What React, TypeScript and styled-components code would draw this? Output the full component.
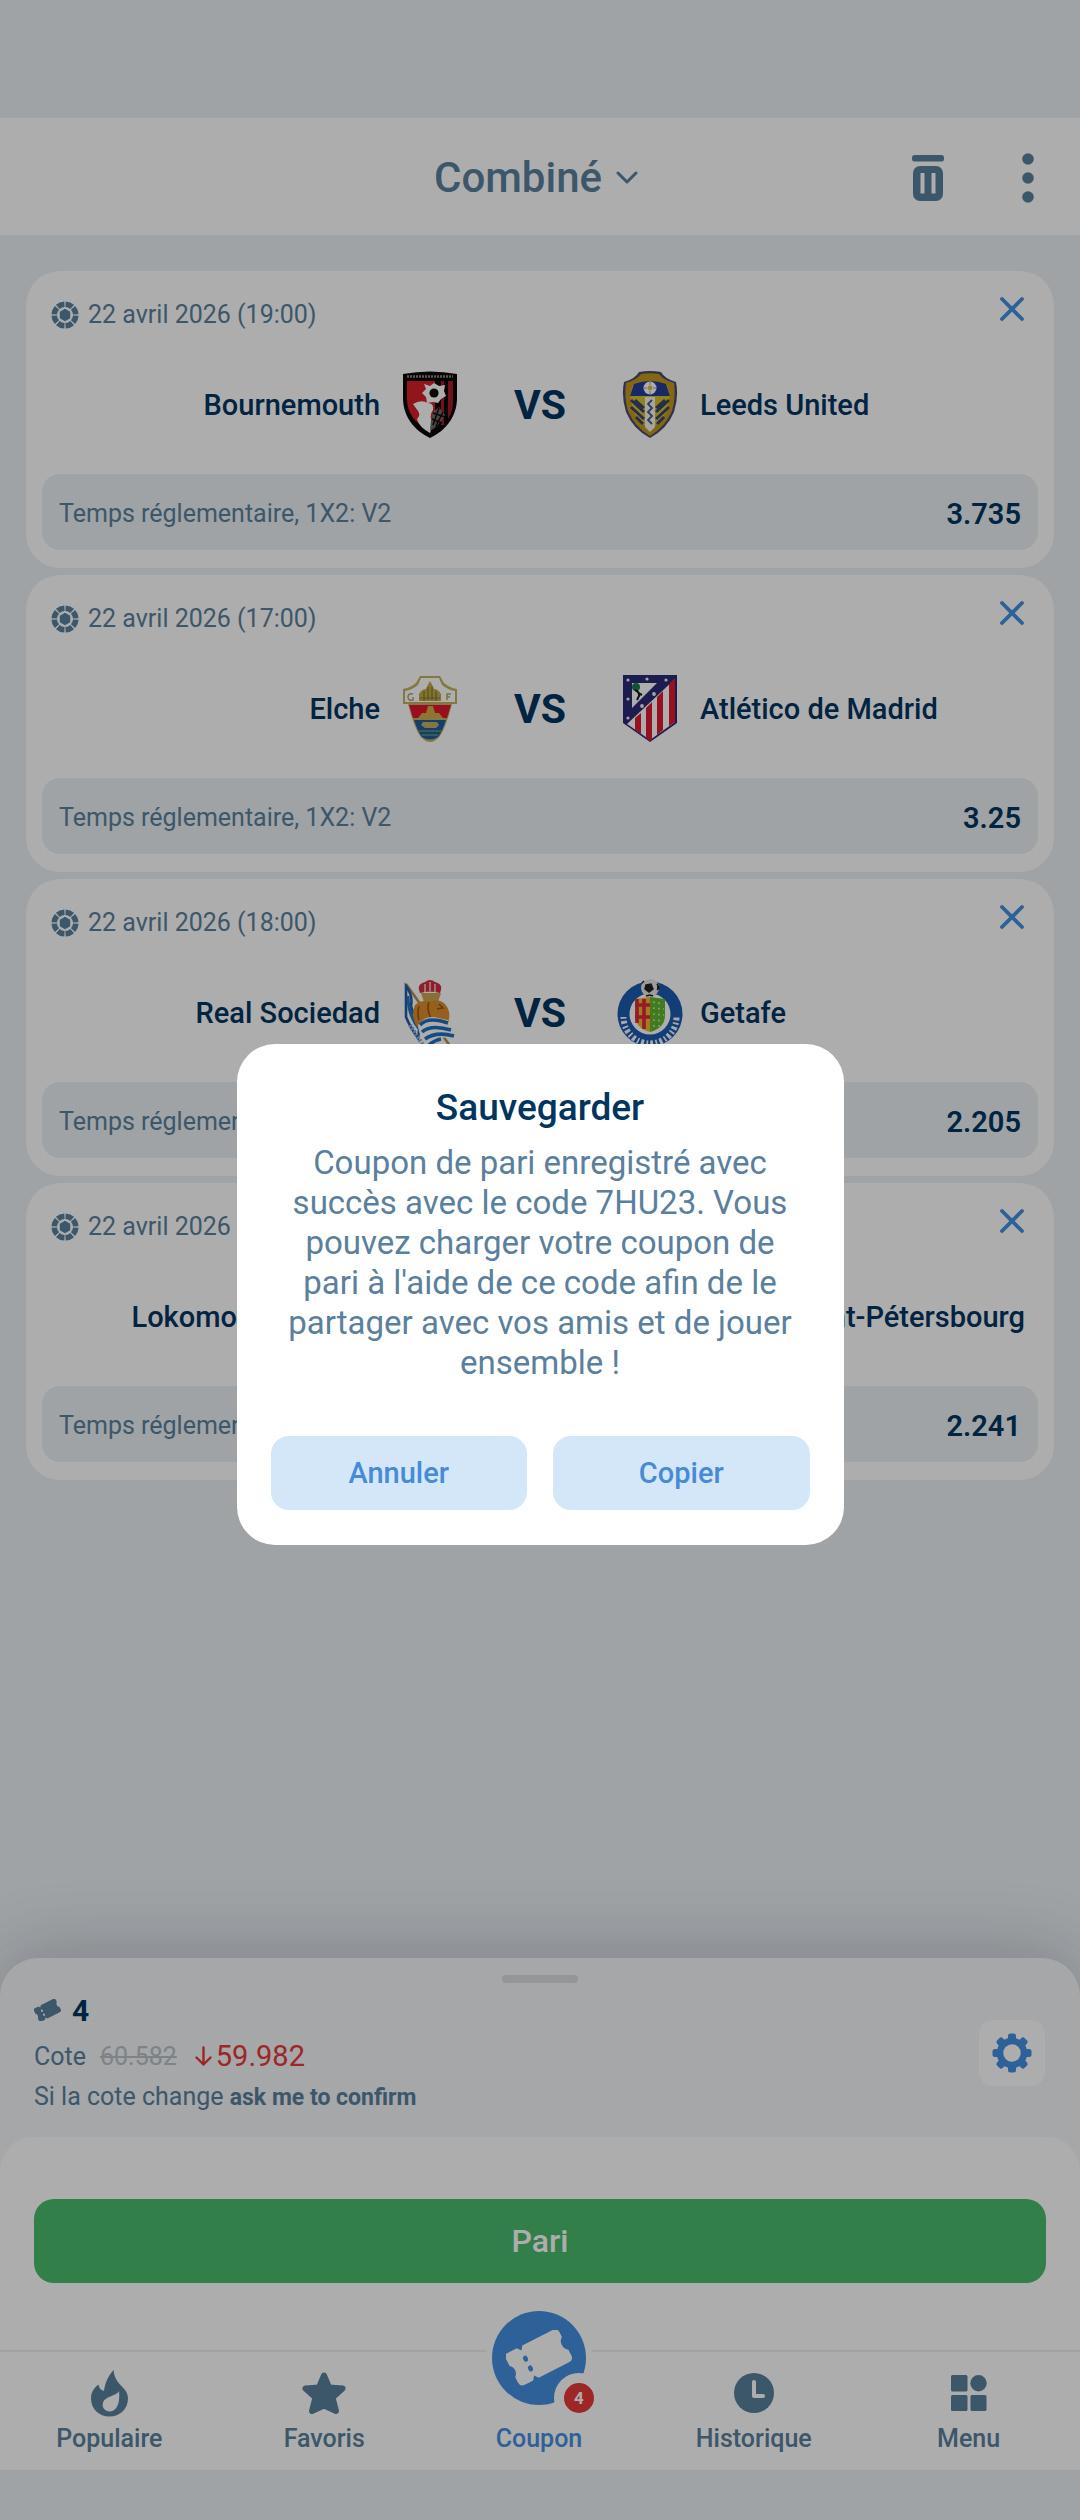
import React from "react";
import styled, { createGlobalStyle } from "styled-components";

const color = {
  page: "#eaf0f4",
  soft: "#f3f6f9",
  white: "#ffffff",
  navy: "#003560",
  slate: "#5b809d",
  muted: "#b9c2c8",
  blue: "#4490e0",
  green: "#4bbb6e",
  red: "#e8383a",
};

const GlobalStyle = createGlobalStyle`
  *, *::before, *::after { box-sizing: border-box; }
  body {
    margin: 0;
    background: ${color.page};
    font-family: Roboto, "Liberation Sans", sans-serif;
    color: ${color.slate};
  }
  h1, h2, p, ul { margin: 0; padding: 0; }
  ul { list-style: none; }
  button, select { font-family: inherit; border: 0; background: none; padding: 0; margin: 0; cursor: pointer; }
  svg { display: block; flex: none; }
`;

const Screen = styled.div`
  display: flex;
  flex-direction: column;
  min-height: 100vh;
  padding: 118px 0 50px;
`;

const Header = styled.header`
  display: grid;
  grid-template-columns: 1fr auto 1fr;
  align-items: center;
  height: 117px;
  padding: 2px 46px 0 38px;
  background: ${color.white};
`;

const TypePicker = styled.label`
  grid-column: 2;
  display: flex;
  align-items: center;
  gap: 13px;
  color: ${color.slate};
`;

const TypeSelect = styled.select`
  appearance: none;
  color: inherit;
  font-size: 42px;
  font-weight: 500;
  line-height: 48px;
`;

const HeaderActions = styled.div`
  display: flex;
  justify-content: flex-end;
  align-items: center;
  gap: 78px;
`;

const IconButton = styled.button`
  display: grid;
  place-items: center;
  color: ${color.slate};
`;

const BetList = styled.ul`
  display: flex;
  flex-direction: column;
  gap: 7px;
  flex: 1;
  padding: 36px 26px;
`;

const Card = styled.li`
  padding: 24px 16px 18px;
  border-radius: 34px;
  background: ${color.white};
`;

const CardHead = styled.div`
  display: flex;
  justify-content: space-between;
  align-items: flex-start;
  height: 36px;
  padding: 0 12px 0 9px;
`;

const KickOff = styled.div`
  display: flex;
  align-items: center;
  gap: 9px;
  font-size: 25px;
  line-height: 40px;
`;

const CloseButton = styled(IconButton)`
  width: 28px;
  height: 28px;
  color: ${color.blue};
`;

const Teams = styled.div`
  display: grid;
  grid-template-columns: 1fr 154px 1fr;
  align-items: center;
  margin-top: 40px;
  color: ${color.navy};
`;

const Team = styled.div<{ $home?: boolean }>`
  display: flex;
  flex-direction: ${(p) => (p.$home ? "row-reverse" : "row")};
  align-items: center;
  gap: 17px;
  font-size: 29px;
  font-weight: 500;
  line-height: 34px;
  white-space: nowrap;
`;

const Versus = styled.span`
  text-align: center;
  font-size: 41px;
  font-weight: 700;
  line-height: 48px;
`;

const Outcome = styled.div`
  display: flex;
  justify-content: space-between;
  align-items: center;
  height: 76px;
  margin-top: 35px;
  padding: 3px 17px 0;
  border-radius: 18px;
  background: ${color.page};
  font-size: 25px;
`;

const Odd = styled.strong`
  color: ${color.navy};
  font-size: 29px;
  font-weight: 600;
`;

const Sheet = styled.section`
  padding-top: 17px;
  border-radius: 38px 38px 0 0;
  background: ${color.soft};
  box-shadow: 0 -8px 70px rgba(20, 20, 50, 0.2);
`;

const Handle = styled.div`
  width: 76px;
  height: 8px;
  margin: 0 auto 4px;
  border-radius: 4px;
  background: #dcdde4;
`;

const Summary = styled.div`
  display: flex;
  justify-content: space-between;
  align-items: center;
  padding: 0 35px 18px 34px;
`;

const SummaryLines = styled.div`
  height: 132px;
  font-size: 25px;
`;

const SummaryLine = styled.div<{ $gap: number }>`
  display: flex;
  align-items: center;
  gap: ${(p) => p.$gap}px;
  height: 46px;
`;

const Count = styled.strong`
  color: ${color.navy};
  font-size: 30px;
  font-weight: 700;
`;

const OldOdd = styled.s`
  color: ${color.muted};
`;

const NewOdd = styled.span`
  display: flex;
  align-items: center;
  gap: 4px;
  margin-left: 4px;
  color: ${color.red};
  font-size: 29px;
`;

const ChangeRule = styled.p`
  font-size: 25px;
  line-height: 36px;
  strong { font-size: 23px; font-weight: 700; }
`;

const GearButton = styled(IconButton)`
  width: 66px;
  height: 66px;
  border-radius: 14px;
  background: ${color.white};
  color: ${color.blue};
`;

const BetPanel = styled.div`
  padding: 62px 34px 67px;
  border-radius: 34px 34px 0 0;
  background: ${color.white};
`;

const BetButton = styled.button`
  width: 100%;
  height: 84px;
  border-radius: 20px;
  background: ${color.green};
  color: ${color.white};
  font-size: 32px;
  font-weight: 500;
`;

const Nav = styled.nav`
  display: grid;
  grid-template-columns: repeat(5, 1fr);
  padding: 17px 4px 16px 2px;
  border-top: 2px solid #efefef;
  background: ${color.white};
`;

const NavLink = styled.a<{ $active?: boolean }>`
  display: flex;
  flex-direction: column;
  align-items: center;
  gap: 7px;
  color: ${(p) => (p.$active ? color.blue : color.slate)};
  font-size: 25px;
  font-weight: 500;
  line-height: 30px;
  text-decoration: none;
`;

const NavIcon = styled.span`
  display: grid;
  place-items: center;
  height: 48px;
`;

const CouponDisc = styled.span`
  position: relative;
  display: grid;
  place-items: center;
  width: 94px;
  height: 94px;
  margin: -58px 0 12px;
  border-radius: 50%;
  background: ${color.blue};
  box-shadow: 0 0 0 6px ${color.white};
  color: ${color.white};
`;

const Badge = styled.span`
  position: absolute;
  left: 62px;
  top: 62px;
  display: grid;
  place-items: center;
  width: 50px;
  height: 50px;
  border: 10px solid ${color.white};
  border-radius: 50%;
  background: ${color.red};
  color: ${color.white};
  font-size: 17px;
  font-weight: 700;
  line-height: 20px;
`;

const Overlay = styled.div`
  position: fixed;
  inset: 0;
  display: grid;
  place-items: center;
  padding: 118px 40px 50px;
  background: rgba(0, 0, 0, 0.32);
`;

const Dialog = styled.div`
  width: 100%;
  max-width: 607px;
  padding: 42px 34px 35px;
  border-radius: 38px;
  background: ${color.white};
  text-align: center;
`;

const DialogTitle = styled.h2`
  color: ${color.navy};
  font-size: 37px;
  font-weight: 500;
  line-height: 44px;
`;

const DialogText = styled.p`
  margin-top: 13px;
  padding: 0 8px;
  font-size: 33px;
  line-height: 40px;
`;

const DialogActions = styled.div`
  display: grid;
  grid-template-columns: 1fr 1fr;
  gap: 26px;
  margin-top: 53px;
`;

const DialogButton = styled.button`
  height: 74px;
  border-radius: 18px;
  background: #d3e7f8;
  color: #478bd6;
  font-size: 29px;
  font-weight: 500;
`;

const BallIcon = () => (
  <svg width="28" height="28" viewBox="-14 -14 28 28" aria-hidden="true">
    <circle r="10.8" fill="none" stroke="currentColor" strokeWidth="5.6" pathLength={80} strokeDasharray="8.6 1.4" strokeDashoffset="-0.7" transform="rotate(-90)" />
    <path fill="currentColor" d="M0-6.200L5.200-3.200V3.200L0 6.200-5.200 3.200V-3.200z" />
  </svg>
);

const CrossIcon = () => (
  <svg width="24" height="24" viewBox="0 0 24 24" aria-hidden="true">
    <path d="M2 2l20 20M22 2L2 22" stroke="currentColor" strokeWidth="3.8" strokeLinecap="round" />
  </svg>
);

const ChevronIcon = () => (
  <svg width="22" height="14" viewBox="0 0 22 14" aria-hidden="true">
    <path d="M2 2l9 9 9-9" fill="none" stroke="currentColor" strokeWidth="3" strokeLinecap="round" strokeLinejoin="round" />
  </svg>
);

const TrashIcon = () => (
  <svg width="32" height="46" viewBox="0 0 32 46" aria-hidden="true">
    <g fill="currentColor">
      <rect width="32" height="6.5" rx="2.5" />
      <path fillRule="evenodd" d="M8 11h16a7 7 0 0 1 7 7v21a7 7 0 0 1-7 7H8a7 7 0 0 1-7-7V18a7 7 0 0 1 7-7zM8.500 18v20.500h4V18zM19.500 18v20.500h4V18z" />
    </g>
  </svg>
);

const DotsIcon = () => (
  <svg width="12" height="50" viewBox="0 0 12 50" aria-hidden="true">
    <g fill="currentColor"><circle cx="6" cy="6" r="5.8" /><circle cx="6" cy="25" r="5.8" /><circle cx="6" cy="44" r="5.8" /></g>
  </svg>
);

const TicketIcon = ({ width, hole }: { width: number; hole: string }) => (
  <svg width={width} height={(width * 54) / 64} viewBox="-32 -27 64 54" aria-hidden="true">
    <g transform="rotate(-27)">
      <path fill="currentColor" d="M-27-18h12l3 4 3-4H24q5 0 5 5v5a7 8 0 0 0 0 14v6q0 5-5 5H-9l-3-4-3 4h-9q-5 0-5-5V6a6 7 0 0 0 0-12v-7q0-4 2-5z" />
      <path stroke={hole} strokeWidth="4.4" strokeLinecap="round" d="M-12-6v1.6M-12 4.6v1.6" />
    </g>
  </svg>
);

const ArrowDownIcon = () => (
  <svg width="17" height="20" viewBox="0 0 17 20" aria-hidden="true">
    <path d="M8.500 1.500v17M1.500 11.500l7 7 7-7" fill="none" stroke="currentColor" strokeWidth="2.400" strokeLinecap="round" strokeLinejoin="round" />
  </svg>
);

const GearIcon = () => (
  <svg width="40" height="40" viewBox="-20 -20 40 40" aria-hidden="true">
    <circle r="12" fill="none" stroke="currentColor" strokeWidth="6.500" />
    {[0, 45, 90, 135, 180, 225, 270, 315].map((a) => (
      <rect key={a} x="-4" y="-19.500" width="8" height="8" rx="2.500" fill="currentColor" transform={`rotate(${a})`} />
    ))}
  </svg>
);

const FlameIcon = () => (
  <svg width="37" height="47" viewBox="0 0 37 47" aria-hidden="true">
    <path
      fill="currentColor"
      fillRule="evenodd"
      d="M22.600 0C23 8 27 12 30 15.500 34 19.500 37 23 37 28.500 37 39 29 46.500 18.500 46.500S0 39 0 28.500C0 22 3 18 7.500 14.500 8 18 9.500 20 13 21 14 13 17 6 22.600 0zM28 21C26 26 14 26 12 32.500 10.500 38 14.500 41.500 18.500 41.500 25 41.500 29.500 34 28 21z"
    />
  </svg>
);

const StarIcon = () => (
  <svg width="44" height="42" viewBox="0 0 44 42" aria-hidden="true">
    <path
      d="M22 3.500l5 12 13.500 1-10 9 3.500 13.500L22 33.500 10 39l3.500-13.500-10-9 13.500-1z"
      fill="currentColor" stroke="currentColor" strokeWidth="6" strokeLinejoin="round"
    />
  </svg>
);

const ClockIcon = () => (
  <svg width="40" height="40" viewBox="0 0 40 40" aria-hidden="true">
    <circle cx="20" cy="20" r="20" fill="currentColor" />
    <path d="M20 9v14h9" fill="none" stroke="#fff" strokeWidth="4" strokeLinecap="round" strokeLinejoin="round" />
  </svg>
);

const GridIcon = () => (
  <svg width="36" height="36" viewBox="0 0 36 36" aria-hidden="true">
    <g fill="currentColor">
      <rect width="16.500" height="16.500" rx="1.500" />
      <circle cx="27.500" cy="8.200" r="8.200" />
      <rect y="20" width="16.500" height="16" rx="1.500" />
      <rect x="19.500" y="20" width="16" height="16" rx="1.500" />
    </g>
  </svg>
);

const Crest = ({ children }: { children: React.ReactNode }) => (
  <svg width="66" height="68" viewBox="0 0 66 68" aria-hidden="true">{children}</svg>
);

const Bournemouth = () => (
  <Crest>
    <path d="M6 3Q33-2 60 3v24C60 46 48 60 33 67 18 60 6 46 6 27z" fill="#0b0708" />
    <path d="M10 10h28v46l-6 4C18 52 10 42 10 28z" fill="#d5202c" />
    <path d="M44 10h3v44h-3zM51 10h5v20q0 10-5 18z" fill="#a51a28" />
    <path d="M10 5.500h46" stroke="#8d8577" strokeWidth="2.400" strokeDasharray="2 1" />
    <path d="M16 33q8-5 15-1 6 0 5 7-3 4-2 9 2 8-1 14Q22 56 20 48q4-4 1-8z" fill="#fff" />
    <path d="M33 60q10-6 15-16l-6-8-6 5-2 8z" fill="#6d6668" />
    <path d="M36 42l12 4M35 48l10 4M42 37l-6 17M46 41l-7 14" stroke="#19090b" strokeWidth="1.500" />
    <path d="M27 13l6 2 4-3 5 3 6-1-1 6 2 5-5 3-3 4-5-1-6 1-1-6-4-4 4-4z" fill="#fff" />
    <circle cx="37" cy="22" r="4.600" fill="#120c0c" />
  </Crest>
);

const Leeds = () => (
  <Crest>
    <path d="M7 11Q18 8 22 1q11-2 22 0 4 7 15 10 3 14-2 30-7 17-24 26Q16 58 9 41 4 25 7 11z" fill="#4b4b70" />
    <path d="M9 12Q20 9 24 3q9-1.500 18 0 4 6 15 9 2 14-2 28-7 16-22 25-15-9-22-25-4-14-2-28z" fill="#c39a1a" />
    <path d="M16 14q17-6 34 0l3 10-3 16q-6 11-17 19-11-8-17-19l-3-16z" fill="#d8c02a" />
    <path d="M17 13q16-6 32 0l4 12H13z" fill="#263c99" />
    <path d="M14 29l13 12M14 36l13 12M18 29l9 8M19 46l7 7M52 29L39 41M52 36L39 48M48 29l-9 8M47 46l-7 7" stroke="#39446f" strokeWidth="3" />
    <path d="M28 26h10v30l-5 5-5-5z" fill="#f4f4f0" />
    <path d="M35 29l-4 4 4 4-4 4 4 4-4 4 4 4" stroke="#49558e" strokeWidth="1.800" fill="none" />
    <circle cx="33" cy="17" r="6.500" fill="#fff" />
    <circle cx="33" cy="17" r="2.400" fill="#e0c42e" />
    <path d="M33 11v3M33 20v3M27 17h3M36 17h3" stroke="#8fa0d0" strokeWidth="1" />
  </Crest>
);

const Elche = () => (
  <Crest>
    <path d="M23 1h20l4 7q6 5 13 6v15h-5Q49 52 43 61q-5 6-10 6t-10-6Q17 52 11 29H6V14q7-1 13-6z" fill="#c2b25d" />
    <path d="M24 3h18l3 7q6 5 13 6v11H8V16q7-1 13-6z" fill="#fff" />
    <path d="M12 30h42l-4 13H16z" fill="#e3172f" />
    <path d="M17 45h32q-4 12-8 17-8 5-16 0-4-5-8-17z" fill="#235a9c" />
    <path d="M22 26V19q3-5 7-5 1-3 4-8 3 5 4 8 4 0 7 5v7z" fill="#c3aa45" />
    <path d="M23 23h20M27 16v10M31 12v13M35 12v13M39 16v10" stroke="#7c7b35" strokeWidth="1.200" />
    <path d="M21 43l4-5h4l2-7h5l2 7h4l4 5z" fill="#d3ad48" />
    <path d="M26 47h14l2 3-3 3H28l-4-3z" fill="#c1af63" />
    <path d="M22 56h22M25 60h16" stroke="#5f9a75" strokeWidth="1.600" />
    <path d="M16 19q-5-1-5 3t5 3v-3M50 25v-6h4M50 22h3" stroke="#b4a766" strokeWidth="1.500" fill="none" />
  </Crest>
);

const Atletico = () => (
  <Crest>
    <path d="M6 0h54v48L33 67 6 48z" fill="#2b2a74" />
    <path d="M58 4v43L33 65 10 49z" fill="#fff" />
    <path d="M58 3v44l-6 4V9zM46 16v39l-6 5V22zM35 27v38l-2 1-4-3V33zM24 38v21l-6-4V43z" fill="#e01a30" />
    <path d="M7 1h50L8 50z" fill="#2b2a74" />
    <path d="M15 8h25L15 33z" fill="#fff" />
    <circle cx="19" cy="12" r="4" fill="#197a4d" />
    <path d="M18 15q5 2 4 6l-2 4M21 18l4 2" stroke="#171314" strokeWidth="2" fill="none" />
    <g fill="#f3f1ff">
      <circle cx="11" cy="5" r="1.600" /><circle cx="30" cy="4" r="1.600" /><circle cx="49" cy="5" r="1.600" />
      <circle cx="11" cy="24" r="1.600" /><circle cx="11" cy="43" r="1.600" /><circle cx="25" cy="31" r="1.900" /><circle cx="37" cy="19" r="1.900" />
    </g>
  </Crest>
);

const Sociedad = () => (
  <Crest>
    <path d="M9 5l44 62" stroke="#b78f48" strokeWidth="2.600" />
    <path d="M9 7q7 9 5 20 3 12 9 18l-2 14Q14 50 9 38z" fill="#fff" stroke="#1b5fae" strokeWidth="2.600" />
    <path d="M11 17q0 20 12 34" stroke="#2673bd" strokeWidth="3" fill="none" />
    <path d="M24 14h20l-4 12H28z" fill="#c9a64c" />
    <path d="M23 14q-4-9 5-11 5-4 10 0 9 2 5 11-10-3-20 0z" fill="#d32a46" />
    <path d="M28 5v8M33 3v9M38 5v8" stroke="#f0c6b6" strokeWidth="1.600" />
    <path d="M18 26q7-6 15-3 8-4 14 1 8 8 4 20l-8 8H24q-12-12-6-26z" fill="#de8c2c" />
    <path d="M32 23q-3 8 3 18M42 25l4 4-6 1M22 27q-2 8 0 14" stroke="#96581a" strokeWidth="1.600" fill="none" />
    <path d="M21 46q6-9 16-8 9 2 14 3 2 8 7 15-8 3-14 3-8 1-14 8-8-8-9-21z" fill="#fff" />
    <path d="M23 46q8-9 28-2M25 53q9-8 29-2M28 60q11-8 29-3M32 66q6-5 12-6" stroke="#1f6fbd" strokeWidth="3.600" fill="none" />
    <path d="M13 46l13 20" stroke="#8caed6" strokeWidth="4" strokeDasharray="2 1.500" />
  </Crest>
);

const Getafe = () => (
  <Crest>
    <circle cx="33" cy="35" r="32.500" fill="#1c5bb0" />
    <circle cx="33" cy="35" r="20.500" fill="#fff" />
    <path d="M6.500 38a26.500 26.500 0 0 0 53 0" fill="none" stroke="#f6f8fc" strokeWidth="6" strokeDasharray="1.800 2.200 3 2.400" />
    <path d="M18 20l15-2v35q-15-4-15-17z" fill="#f2b632" />
    <path d="M20 20v24M27 20v30M18 26h15M18 38h15" stroke="#d92a3a" strokeWidth="3.600" fill="none" />
    <path d="M33 18l15 2v16q0 13-15 17z" fill="#62b52e" />
    <path d="M36 23l10 2M36 29l11 1M36 35l11 1M36 41l10 1M36 47h7" stroke="#c9e79a" strokeWidth="1.600" strokeDasharray="2 3" />
    <circle cx="33" cy="9" r="9" fill="#e7e7e7" />
    <path d="M29 6l5-1 2 5-4 3-4-3zM25 4l2-2M40 5l2 4-2 2M29 17l4-1 3 1" fill="#222" stroke="#222" strokeWidth="1.500" />
  </Crest>
);

const Lokomotiv = () => (
  <Crest>
    <path d="M33 1l24 14v30L33 67 9 45V15z" fill="#c8202f" />
    <path d="M18 24h30v10H18z" fill="#fff" />
    <circle cx="33" cy="46" r="8" fill="none" stroke="#fff" strokeWidth="3" />
  </Crest>
);

const Zenit = () => (
  <Crest>
    <path d="M4 20h58L40 54H26z" fill="#1c7fc4" />
    <path d="M12 28h42M18 37h30" stroke="#fff" strokeWidth="3" />
  </Crest>
);

const bets = [
  { time: "22 avril 2026 (19:00)", home: "Bournemouth", HomeCrest: Bournemouth, away: "Leeds United", AwayCrest: Leeds, odd: "3.735" },
  { time: "22 avril 2026 (17:00)", home: "Elche", HomeCrest: Elche, away: "Atlético de Madrid", AwayCrest: Atletico, odd: "3.25" },
  { time: "22 avril 2026 (18:00)", home: "Real Sociedad", HomeCrest: Sociedad, away: "Getafe", AwayCrest: Getafe, odd: "2.205" },
  { time: "22 avril 2026 (18:30)", home: "Lokomotiv Moscou", HomeCrest: Lokomotiv, away: "Zénith Saint-Pétersbourg", AwayCrest: Zenit, odd: "2.241" },
];

const BetCard = ({ bet }: { bet: (typeof bets)[number] }) => (
  <Card>
    <CardHead>
      <KickOff><BallIcon />{bet.time}</KickOff>
      <CloseButton type="button" aria-label={`Retirer ${bet.home}`}><CrossIcon /></CloseButton>
    </CardHead>
    <Teams>
      <Team $home><bet.HomeCrest />{bet.home}</Team>
      <Versus>VS</Versus>
      <Team><bet.AwayCrest />{bet.away}</Team>
    </Teams>
    <Outcome>
      <span>Temps réglementaire, 1X2: V2</span>
      <Odd>{bet.odd}</Odd>
    </Outcome>
  </Card>
);

export default function App() {
  return (
    <>
      <GlobalStyle />
      <Screen>
        <Header>
          <TypePicker>
            <TypeSelect aria-label="Type de pari" defaultValue="combine">
              <option value="combine">Combiné</option>
            </TypeSelect>
            <ChevronIcon />
          </TypePicker>
          <HeaderActions>
            <IconButton type="button" aria-label="Vider le coupon"><TrashIcon /></IconButton>
            <IconButton type="button" aria-label="Plus d'options"><DotsIcon /></IconButton>
          </HeaderActions>
        </Header>

        <BetList>
          {bets.map((bet) => <BetCard key={bet.home} bet={bet} />)}
        </BetList>

        <Sheet>
          <Handle />
          <Summary>
            <SummaryLines>
              <SummaryLine $gap={11}>
                <TicketIcon width={27} hole={color.soft} />
                <Count>4</Count>
              </SummaryLine>
              <SummaryLine $gap={14}>
                <span>Cote</span>
                <OldOdd>60.582</OldOdd>
                <NewOdd><ArrowDownIcon />59.982</NewOdd>
              </SummaryLine>
              <ChangeRule>Si la cote change <strong>ask me to confirm</strong></ChangeRule>
            </SummaryLines>
            <GearButton type="button" aria-label="Paramètres"><GearIcon /></GearButton>
          </Summary>
          <BetPanel>
            <BetButton type="button">Pari</BetButton>
          </BetPanel>
        </Sheet>

        <Nav>
          <NavLink href="#populaire"><NavIcon><FlameIcon /></NavIcon>Populaire</NavLink>
          <NavLink href="#favoris"><NavIcon><StarIcon /></NavIcon>Favoris</NavLink>
          <NavLink href="#coupon" $active>
            <NavIcon>
              <CouponDisc>
                <TicketIcon width={66} hole={color.blue} />
                <Badge>4</Badge>
              </CouponDisc>
            </NavIcon>
            Coupon
          </NavLink>
          <NavLink href="#historique"><NavIcon><ClockIcon /></NavIcon>Historique</NavLink>
          <NavLink href="#menu"><NavIcon><GridIcon /></NavIcon>Menu</NavLink>
        </Nav>
      </Screen>

      <Overlay>
        <Dialog role="dialog" aria-modal="true" aria-labelledby="save-title">
          <DialogTitle id="save-title">Sauvegarder</DialogTitle>
          <DialogText>
            Coupon de pari enregistré avec succès avec le code 7HU23. Vous pouvez charger votre coupon de pari à l'aide de ce code afin de le partager avec vos amis et de jouer ensemble !
          </DialogText>
          <DialogActions>
            <DialogButton type="button">Annuler</DialogButton>
            <DialogButton type="button">Copier</DialogButton>
          </DialogActions>
        </Dialog>
      </Overlay>
    </>
  );
}
